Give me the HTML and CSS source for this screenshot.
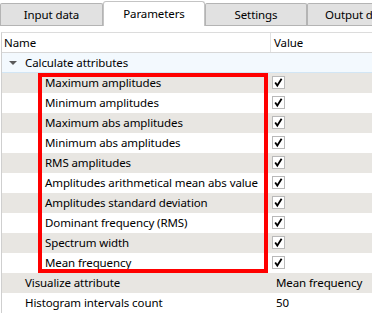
FILE: index.html
```html
<!DOCTYPE html>
<html lang="en">
<head>
  <meta charset="UTF-8">
  <title>Parameters</title>
  <link rel="stylesheet" href="styles.css">
</head>
<body>

  <!-- Tab strip -->
  <div class="tabs">
    <div class="tab first">Input data</div>
    <div class="tab active">Parameters</div>
    <div class="tab">Settings</div>
    <div class="tab last">Output data</div>
  </div>

  <!-- Property grid -->
  <div class="pane">
    <div class="grid">
      <div class="head">
        <div class="col-name">Name</div>
        <div class="col-value">Value</div>
      </div>

      <div class="group"><span class="arrow"></span>Calculate attributes</div>

      <div class="attrs">
        <div class="row"><div class="col-name sub">Maximum amplitudes</div><div class="col-value"><span class="check"><svg width="11" height="11" viewBox="0 0 11 11"><path d="M2.2 5.6 L4.3 8.6 L8.6 1.8" /></svg></span></div></div>
        <div class="row"><div class="col-name sub">Minimum amplitudes</div><div class="col-value"><span class="check"><svg width="11" height="11" viewBox="0 0 11 11"><path d="M2.2 5.6 L4.3 8.6 L8.6 1.8" /></svg></span></div></div>
        <div class="row"><div class="col-name sub">Maximum abs amplitudes</div><div class="col-value"><span class="check"><svg width="11" height="11" viewBox="0 0 11 11"><path d="M2.2 5.6 L4.3 8.6 L8.6 1.8" /></svg></span></div></div>
        <div class="row"><div class="col-name sub">Minimum abs amplitudes</div><div class="col-value"><span class="check"><svg width="11" height="11" viewBox="0 0 11 11"><path d="M2.2 5.6 L4.3 8.6 L8.6 1.8" /></svg></span></div></div>
        <div class="row"><div class="col-name sub">RMS amplitudes</div><div class="col-value"><span class="check"><svg width="11" height="11" viewBox="0 0 11 11"><path d="M2.2 5.6 L4.3 8.6 L8.6 1.8" /></svg></span></div></div>
        <div class="row"><div class="col-name sub">Amplitudes arithmetical mean abs value</div><div class="col-value"><span class="check"><svg width="11" height="11" viewBox="0 0 11 11"><path d="M2.2 5.6 L4.3 8.6 L8.6 1.8" /></svg></span></div></div>
        <div class="row"><div class="col-name sub">Amplitudes standard deviation</div><div class="col-value"><span class="check"><svg width="11" height="11" viewBox="0 0 11 11"><path d="M2.2 5.6 L4.3 8.6 L8.6 1.8" /></svg></span></div></div>
        <div class="row"><div class="col-name sub">Dominant frequency (RMS)</div><div class="col-value"><span class="check"><svg width="11" height="11" viewBox="0 0 11 11"><path d="M2.2 5.6 L4.3 8.6 L8.6 1.8" /></svg></span></div></div>
        <div class="row"><div class="col-name sub">Spectrum width</div><div class="col-value"><span class="check"><svg width="11" height="11" viewBox="0 0 11 11"><path d="M2.2 5.6 L4.3 8.6 L8.6 1.8" /></svg></span></div></div>
        <div class="row"><div class="col-name sub">Mean frequency</div><div class="col-value"><span class="check"><svg width="11" height="11" viewBox="0 0 11 11"><path d="M2.2 5.6 L4.3 8.6 L8.6 1.8" /></svg></span></div></div>
        <div class="highlight"></div>
      </div>

      <div class="row"><div class="col-name">Visualize attribute</div><div class="col-value text">Mean frequency</div></div>
      <div class="row"><div class="col-name">Histogram intervals count</div><div class="col-value text">50</div></div>
    </div>
  </div>

</body>
</html>
```

FILE: styles.css
```css
body {
  margin: 0;
  width: 372px;
  height: 324px;
  overflow: hidden;
  background-color: #fff;
  color: #000;
  font-family: "Noto Sans", sans-serif;
  font-size: 11.5px;
  letter-spacing: -0.1px;
}

/* tabs */
.tabs {
  display: flex;
  align-items: flex-end;
  height: 25px;
  border-bottom: 1px solid #b4b4b4;
  white-space: nowrap;
}
.tab {
  flex: none;
  width: 102px;
  height: 22px;
  line-height: 21px;
  box-sizing: border-box;
  text-align: center;
  background-color: #e1e1e1;
  border: 1px solid #b4b4b4;
  border-bottom: none;
  border-radius: 2px 2px 0 0;
}
.tab.first {
  width: 103px;
}
.tab.last {
  text-align: left;
  padding-left: 17px;
}
.tab.active {
  position: relative;
  height: 25px;
  line-height: 23px;
  margin-bottom: -1px;
  background-color: #fff;
  border-color: #c4c4c4;
  border-radius: 3px 3px 0 0;
}

/* grid */
.pane {
  padding: 6px 0 0 1px;
}
.grid {
  border-top: 1px solid #dcdcdc;
  border-left: 1px solid #cfcfcf;
}
.head {
  display: flex;
  height: 19px;
  line-height: 19px;
  border-bottom: 1px solid #d7d7d7;
}
.head .col-name {
  padding-left: 2px;
  border-right: 1px solid #e2e2e2;
}
.head .col-value {
  padding-left: 3px;
}
.col-name {
  flex: none;
  width: 269px;
  box-sizing: border-box;
  white-space: nowrap;
}
.col-value {
  flex: 1;
  white-space: nowrap;
}
.group {
  height: 19px;
  line-height: 19px;
  padding-left: 23px;
  position: relative;
  background-color: #f3f9fe;
  border-bottom: 1px solid #d2e6f5;
}
.arrow {
  position: absolute;
  left: 7px;
  top: 8px;
  border-left: 4px solid transparent;
  border-right: 4px solid transparent;
  border-top: 4px solid #5a5a5a;
}
.row {
  display: flex;
  height: 20px;
  line-height: 20px;
}
.row .col-name {
  padding-left: 23px;
}
.row .col-name.sub {
  padding-left: 43px;
}
.attrs {
  position: relative;
}
.attrs .row:nth-child(odd) {
  background-color: #e8e6e2;
}
.attrs + .row {
  background-color: #e8e6e2;
}
.row .col-value.text {
  padding-left: 5px;
}
.check {
  display: inline-block;
  width: 13px;
  height: 13px;
  margin-top: 3px;
  margin-left: 1px;
  box-sizing: border-box;
  border: 1px solid #b9b9b9;
  background-color: #fff;
  vertical-align: top;
}
.check svg {
  display: block;
}
.check path {
  fill: none;
  stroke: #000;
  stroke-width: 1.8;
}
.highlight {
  position: absolute;
  left: 36px;
  top: 0;
  width: 230px;
  height: 200px;
  box-sizing: border-box;
  border: 4px solid #ff0000;
}
```
